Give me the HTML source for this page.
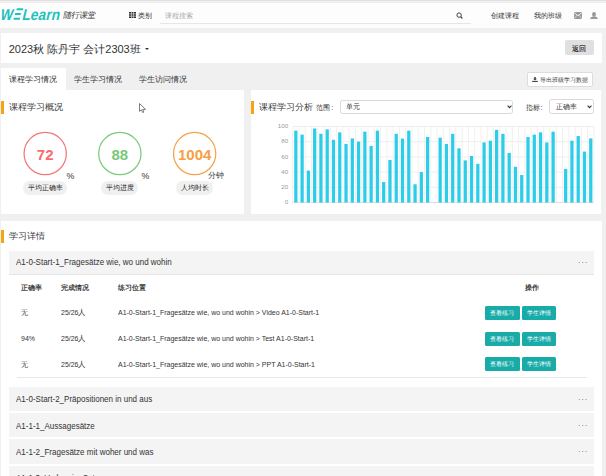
<!DOCTYPE html>
<html><head><meta charset="utf-8">
<style>
*{box-sizing:border-box;margin:0;padding:0}
html,body{width:606px;height:476px;overflow:hidden;background:#f0f0f0;font-family:"Liberation Sans",sans-serif;color:#333}
.a{position:absolute}
.t{position:absolute;white-space:nowrap;line-height:1}
.w{background:#fff}
</style></head><body>
<!-- header -->
<div class="a" style="left:0;top:0;width:606px;height:1px;background:#e0e0e0"></div><div class="a" style="left:0;top:1px;width:606px;height:1px;background:#f4f4f4"></div><div class="a" style="left:0;top:2px;width:606px;height:1px;background:#ececec"></div>
<div class="a" style="left:0;top:3px;width:606px;height:25px;background:#fdfdfd"></div>
<svg class="a" style="left:0;top:0" width="62" height="26" viewBox="0 0 62 26"><g transform="translate(0,19.8) skewX(-13)" fill="#1fc3bd">
<text x="-0.6" y="0" font-family="Liberation Sans" font-weight="bold" font-size="15.8" transform="scale(0.84,1)">W</text>
<rect x="14.2" y="-11.6" width="6.4" height="2.1"/><rect x="13.7" y="-6.8" width="5.8" height="2.1"/><rect x="13.3" y="-2.1" width="6.4" height="2.1"/>
<text x="24.6" y="0" font-family="Liberation Sans" font-weight="bold" font-size="15.8" transform="scale(0.87,1)" letter-spacing="0.1">Learn</text>
</g></svg>
<div class="t" style="left:62.5px;top:11.3px;font-size:8.4px;color:#3a3a3a;transform:skewX(-10deg);transform-origin:0 100%">随行课堂</div>
<svg class="a" style="left:128.6px;top:12.4px" width="7" height="6" viewBox="0 0 7 6"><g fill="#333"><rect x="0" y="0" width="2" height="1.6"/><rect x="2.5" y="0" width="2" height="1.6"/><rect x="5" y="0" width="2" height="1.6"/><rect x="0" y="2.2" width="2" height="1.6"/><rect x="2.5" y="2.2" width="2" height="1.6"/><rect x="5" y="2.2" width="2" height="1.6"/><rect x="0" y="4.4" width="2" height="1.6"/><rect x="2.5" y="4.4" width="2" height="1.6"/><rect x="5" y="4.4" width="2" height="1.6"/></g></svg>
<div class="t" style="left:137.8px;top:11.5px;font-size:7px;color:#333">类别</div>
<div class="a" style="left:160px;top:23px;width:311px;height:1px;background:#e6e6e6"></div>
<div class="t" style="left:164.9px;top:11.5px;font-size:7px;color:#aaa">课程搜索</div>
<svg class="a" style="left:455.5px;top:12px" width="8" height="8" viewBox="0 0 8 8"><circle cx="3.1" cy="3.1" r="2.2" fill="none" stroke="#444" stroke-width="1"/><line x1="4.7" y1="4.7" x2="6.4" y2="6.5" stroke="#444" stroke-width="1.2"/></svg>
<div class="t" style="left:490.9px;top:11.5px;font-size:7px;color:#333">创建课程</div>
<div class="t" style="left:533.8px;top:11.5px;font-size:7px;color:#333">我的班级</div>
<svg class="a" style="left:573.7px;top:11.8px" width="8" height="7.2" viewBox="0 0 8 7.2"><rect x="0" y="0" width="8" height="7.2" fill="#999"/><path d="M0 0.5 L4 3.8 L8 0.5" fill="none" stroke="#fff" stroke-width="0.8"/><path d="M0 6.8 L3 3.3 M8 6.8 L5 3.3" stroke="#fff" stroke-width="0.6"/></svg>
<svg class="a" style="left:590px;top:11.8px" width="8" height="7.2" viewBox="0 0 8 7.2"><ellipse cx="4" cy="2.4" rx="1.9" ry="2.4" fill="#999"/><path d="M0 7.2 Q0.3 4.8 2.8 4.6 L5.2 4.6 Q7.7 4.8 8 7.2 Z" fill="#999"/></svg>

<!-- title card -->
<div class="a w" style="left:1.3px;top:33.3px;width:600.4px;height:29.3px"></div>
<div class="t" style="left:8.7px;top:43.5px;font-size:11px;color:#333">2023秋 陈丹宇 会计2303班</div>
<div class="a" style="left:144.6px;top:47.8px;width:0;height:0;border-left:2px solid transparent;border-right:2px solid transparent;border-top:2px solid #333"></div>
<div class="a" style="left:565.2px;top:40.4px;width:28.7px;height:14.7px;background:#e0e0e0;border-radius:2px"></div>
<div class="t" style="left:564.7px;top:44.6px;width:28.7px;text-align:center;font-size:7px;color:#111;-webkit-text-stroke:0.1px #111">返回</div>

<!-- tabs -->
<div class="a w" style="left:1.3px;top:68.1px;width:64.7px;height:22.2px"></div>
<div class="t" style="left:8.9px;top:75.9px;font-size:8px;color:#333">课程学习情况</div>
<div class="t" style="left:73.9px;top:75.9px;font-size:8px;color:#333">学生学习情况</div>
<div class="t" style="left:138.6px;top:75.9px;font-size:8px;color:#333">学生访问情况</div>
<div class="a w" style="left:526.6px;top:72.3px;width:66.7px;height:14.8px;border:1px solid #ddd;border-radius:2px"></div>
<svg class="a" style="left:532px;top:77px" width="6" height="5" viewBox="0 0 6 5"><path d="M2.2 0 H3.8 V1.8 H5 L3 3.6 L1 1.8 H2.2 Z" fill="#444"/><rect x="0.2" y="3.9" width="5.6" height="1.1" fill="#444"/></svg>
<div class="t" style="left:539.8px;top:76.7px;font-size:6px;color:#333">导出班级学习数据</div>

<!-- left panel -->
<div class="a w" style="left:1.3px;top:90.1px;width:243.1px;height:124.1px"></div>
<div class="a" style="left:1.3px;top:101.4px;width:2.5px;height:12.2px;background:#f7a312"></div>
<div class="t" style="left:8.8px;top:103px;font-size:9px;color:#3c3c3c">课程学习概况</div>

<svg class="a" style="left:0;top:0" width="245" height="215">
<circle cx="45.2" cy="153.55" r="21.15" fill="none" stroke="#f57878" stroke-width="1.25"/>
<circle cx="119.85" cy="153.55" r="21.15" fill="none" stroke="#7bc97b" stroke-width="1.25"/>
<circle cx="194.65" cy="153.55" r="21.15" fill="none" stroke="#f5a446" stroke-width="1.25"/>
</svg>
<div class="t" style="left:15.2px;top:147.3px;width:60px;text-align:center;font-size:15px;font-weight:bold;color:#f86a6e">72</div>
<div class="t" style="left:89.85px;top:147.3px;width:60px;text-align:center;font-size:15px;font-weight:bold;color:#79c879">88</div>
<div class="t" style="left:164.65px;top:147.3px;width:60px;text-align:center;font-size:15px;font-weight:bold;color:#f5a042">1004</div>
<div class="t" style="left:66.6px;top:171.5px;font-size:8.8px;color:#333">%</div>
<div class="t" style="left:141.6px;top:171.5px;font-size:8.8px;color:#333">%</div>
<div class="t" style="left:207.5px;top:171.5px;font-size:8px;color:#333">分钟</div>
<div class="t" style="left:23px;top:181.4px;width:44.4px;height:13.3px;line-height:13.6px;text-align:center;font-size:7px;color:#222;background:#f0f0f0;border-radius:7px">平均正确率</div>
<div class="t" style="left:101.1px;top:181.4px;width:37.3px;height:13.3px;line-height:13.6px;text-align:center;font-size:7px;color:#222;background:#f0f0f0;border-radius:7px">平均进度</div>
<div class="t" style="left:176.1px;top:181.4px;width:37.3px;height:13.3px;line-height:13.6px;text-align:center;font-size:7px;color:#222;background:#f0f0f0;border-radius:7px">人均时长</div>

<!-- right panel -->
<div class="a w" style="left:251px;top:90.1px;width:350.3px;height:124.1px"></div>
<div class="a" style="left:251.3px;top:101px;width:2.5px;height:12.8px;background:#f7a312"></div>
<div class="t" style="left:258.6px;top:103px;font-size:9px;color:#3c3c3c">课程学习分析</div>
<div class="t" style="left:316.3px;top:103.5px;font-size:7px;color:#333">范围</div>
<div class="t" style="left:331.2px;top:103.5px;font-size:7px;color:#333">:</div>
<div class="a" style="left:339.6px;top:99.5px;width:173.8px;height:14.9px;border:1px solid #d9d9d9;border-radius:2.5px;background:#fff"></div>
<div class="t" style="left:346.3px;top:103.4px;font-size:7px;color:#333">单元</div>
<svg class="a" style="left:506.5px;top:105px" width="5" height="4" viewBox="0 0 5 4"><path d="M0.6 0.7 L2.5 2.7 L4.4 0.7" fill="none" stroke="#333" stroke-width="1.1"/></svg>
<div class="t" style="left:525.8px;top:103.5px;font-size:7px;color:#333">指标</div>
<div class="t" style="left:540.6px;top:103.5px;font-size:7px;color:#333">:</div>
<div class="a" style="left:549.4px;top:99.2px;width:44.5px;height:15px;border:1px solid #d9d9d9;border-radius:2.5px;background:#fff"></div>
<div class="t" style="left:555.6px;top:103.6px;font-size:6.6px;color:#333">正确率</div>
<svg class="a" style="left:586.5px;top:105px" width="5" height="4" viewBox="0 0 5 4"><path d="M0.6 0.7 L2.5 2.7 L4.4 0.7" fill="none" stroke="#333" stroke-width="1.1"/></svg>

<svg class="a" style="left:0;top:0" width="606" height="215"><line x1="292.7" y1="202.5" x2="593.9" y2="202.5" stroke="#ddd" stroke-width="1"></line><text x="288.2" y="204.1" font-size="6.2" fill="#999" text-anchor="end" font-family="Liberation Sans">0</text><line x1="292.7" y1="187.3" x2="593.9" y2="187.3" stroke="#eee" stroke-width="1"></line><text x="288.2" y="188.9" font-size="6.2" fill="#999" text-anchor="end" font-family="Liberation Sans">20</text><line x1="292.7" y1="172.1" x2="593.9" y2="172.1" stroke="#eee" stroke-width="1"></line><text x="288.2" y="173.7" font-size="6.2" fill="#999" text-anchor="end" font-family="Liberation Sans">40</text><line x1="292.7" y1="156.9" x2="593.9" y2="156.9" stroke="#eee" stroke-width="1"></line><text x="288.2" y="158.5" font-size="6.2" fill="#999" text-anchor="end" font-family="Liberation Sans">60</text><line x1="292.7" y1="141.7" x2="593.9" y2="141.7" stroke="#eee" stroke-width="1"></line><text x="288.2" y="143.29999999999998" font-size="6.2" fill="#999" text-anchor="end" font-family="Liberation Sans">80</text><line x1="292.7" y1="126.5" x2="593.9" y2="126.5" stroke="#eee" stroke-width="1"></line><text x="288.2" y="128.1" font-size="6.2" fill="#999" text-anchor="end" font-family="Liberation Sans">100</text><line x1="292.7" y1="126.5" x2="292.7" y2="202.5" stroke="#f0f0f0" stroke-width="1"></line><line x1="298.97499999999997" y1="126.5" x2="298.97499999999997" y2="202.5" stroke="#f0f0f0" stroke-width="1"></line><line x1="305.25" y1="126.5" x2="305.25" y2="202.5" stroke="#f0f0f0" stroke-width="1"></line><line x1="311.525" y1="126.5" x2="311.525" y2="202.5" stroke="#f0f0f0" stroke-width="1"></line><line x1="317.8" y1="126.5" x2="317.8" y2="202.5" stroke="#f0f0f0" stroke-width="1"></line><line x1="324.075" y1="126.5" x2="324.075" y2="202.5" stroke="#f0f0f0" stroke-width="1"></line><line x1="330.34999999999997" y1="126.5" x2="330.34999999999997" y2="202.5" stroke="#f0f0f0" stroke-width="1"></line><line x1="336.625" y1="126.5" x2="336.625" y2="202.5" stroke="#f0f0f0" stroke-width="1"></line><line x1="342.9" y1="126.5" x2="342.9" y2="202.5" stroke="#f0f0f0" stroke-width="1"></line><line x1="349.17499999999995" y1="126.5" x2="349.17499999999995" y2="202.5" stroke="#f0f0f0" stroke-width="1"></line><line x1="355.45" y1="126.5" x2="355.45" y2="202.5" stroke="#f0f0f0" stroke-width="1"></line><line x1="361.72499999999997" y1="126.5" x2="361.72499999999997" y2="202.5" stroke="#f0f0f0" stroke-width="1"></line><line x1="368" y1="126.5" x2="368" y2="202.5" stroke="#f0f0f0" stroke-width="1"></line><line x1="374.275" y1="126.5" x2="374.275" y2="202.5" stroke="#f0f0f0" stroke-width="1"></line><line x1="380.54999999999995" y1="126.5" x2="380.54999999999995" y2="202.5" stroke="#f0f0f0" stroke-width="1"></line><line x1="386.825" y1="126.5" x2="386.825" y2="202.5" stroke="#f0f0f0" stroke-width="1"></line><line x1="393.09999999999997" y1="126.5" x2="393.09999999999997" y2="202.5" stroke="#f0f0f0" stroke-width="1"></line><line x1="399.375" y1="126.5" x2="399.375" y2="202.5" stroke="#f0f0f0" stroke-width="1"></line><line x1="405.65" y1="126.5" x2="405.65" y2="202.5" stroke="#f0f0f0" stroke-width="1"></line><line x1="411.92499999999995" y1="126.5" x2="411.92499999999995" y2="202.5" stroke="#f0f0f0" stroke-width="1"></line><line x1="418.2" y1="126.5" x2="418.2" y2="202.5" stroke="#f0f0f0" stroke-width="1"></line><line x1="424.47499999999997" y1="126.5" x2="424.47499999999997" y2="202.5" stroke="#f0f0f0" stroke-width="1"></line><line x1="430.75" y1="126.5" x2="430.75" y2="202.5" stroke="#f0f0f0" stroke-width="1"></line><line x1="437.025" y1="126.5" x2="437.025" y2="202.5" stroke="#f0f0f0" stroke-width="1"></line><line x1="443.29999999999995" y1="126.5" x2="443.29999999999995" y2="202.5" stroke="#f0f0f0" stroke-width="1"></line><line x1="449.575" y1="126.5" x2="449.575" y2="202.5" stroke="#f0f0f0" stroke-width="1"></line><line x1="455.84999999999997" y1="126.5" x2="455.84999999999997" y2="202.5" stroke="#f0f0f0" stroke-width="1"></line><line x1="462.125" y1="126.5" x2="462.125" y2="202.5" stroke="#f0f0f0" stroke-width="1"></line><line x1="468.4" y1="126.5" x2="468.4" y2="202.5" stroke="#f0f0f0" stroke-width="1"></line><line x1="474.67499999999995" y1="126.5" x2="474.67499999999995" y2="202.5" stroke="#f0f0f0" stroke-width="1"></line><line x1="480.94999999999993" y1="126.5" x2="480.94999999999993" y2="202.5" stroke="#f0f0f0" stroke-width="1"></line><line x1="487.22499999999997" y1="126.5" x2="487.22499999999997" y2="202.5" stroke="#f0f0f0" stroke-width="1"></line><line x1="493.5" y1="126.5" x2="493.5" y2="202.5" stroke="#f0f0f0" stroke-width="1"></line><line x1="499.775" y1="126.5" x2="499.775" y2="202.5" stroke="#f0f0f0" stroke-width="1"></line><line x1="506.04999999999995" y1="126.5" x2="506.04999999999995" y2="202.5" stroke="#f0f0f0" stroke-width="1"></line><line x1="512.3249999999999" y1="126.5" x2="512.3249999999999" y2="202.5" stroke="#f0f0f0" stroke-width="1"></line><line x1="518.5999999999999" y1="126.5" x2="518.5999999999999" y2="202.5" stroke="#f0f0f0" stroke-width="1"></line><line x1="524.875" y1="126.5" x2="524.875" y2="202.5" stroke="#f0f0f0" stroke-width="1"></line><line x1="531.15" y1="126.5" x2="531.15" y2="202.5" stroke="#f0f0f0" stroke-width="1"></line><line x1="537.425" y1="126.5" x2="537.425" y2="202.5" stroke="#f0f0f0" stroke-width="1"></line><line x1="543.6999999999999" y1="126.5" x2="543.6999999999999" y2="202.5" stroke="#f0f0f0" stroke-width="1"></line><line x1="549.9749999999999" y1="126.5" x2="549.9749999999999" y2="202.5" stroke="#f0f0f0" stroke-width="1"></line><line x1="556.25" y1="126.5" x2="556.25" y2="202.5" stroke="#f0f0f0" stroke-width="1"></line><line x1="562.525" y1="126.5" x2="562.525" y2="202.5" stroke="#f0f0f0" stroke-width="1"></line><line x1="568.8" y1="126.5" x2="568.8" y2="202.5" stroke="#f0f0f0" stroke-width="1"></line><line x1="575.075" y1="126.5" x2="575.075" y2="202.5" stroke="#f0f0f0" stroke-width="1"></line><line x1="581.3499999999999" y1="126.5" x2="581.3499999999999" y2="202.5" stroke="#f0f0f0" stroke-width="1"></line><line x1="587.625" y1="126.5" x2="587.625" y2="202.5" stroke="#f0f0f0" stroke-width="1"></line><line x1="593.9" y1="126.5" x2="593.9" y2="202.5" stroke="#f0f0f0" stroke-width="1"></line><rect x="294.2125" y="130.60399999999998" width="3.25" height="71.896" fill="#2ccde8"></rect><rect x="300.4875" y="134.632" width="3.25" height="67.868" fill="#2ccde8"></rect><rect x="306.7625" y="170.57999999999998" width="3.25" height="31.92" fill="#2ccde8"></rect><rect x="313.03749999999997" y="128.476" width="3.25" height="74.024" fill="#2ccde8"></rect><rect x="319.3125" y="133.796" width="3.25" height="68.70400000000001" fill="#2ccde8"></rect><rect x="325.5875" y="129.312" width="3.25" height="73.188" fill="#2ccde8"></rect><rect x="331.86249999999995" y="139.8" width="3.25" height="62.7" fill="#2ccde8"></rect><rect x="338.1375" y="132.352" width="3.25" height="70.148" fill="#2ccde8"></rect><rect x="344.41249999999997" y="143.904" width="3.25" height="58.596" fill="#2ccde8"></rect><rect x="350.6875" y="138.43200000000002" width="3.25" height="64.068" fill="#2ccde8"></rect><rect x="356.9625" y="141.624" width="3.25" height="60.876" fill="#2ccde8"></rect><rect x="363.23749999999995" y="131.668" width="3.25" height="70.832" fill="#2ccde8"></rect><rect x="369.5125" y="146.03199999999998" width="3.25" height="56.468" fill="#2ccde8"></rect><rect x="375.78749999999997" y="130.60399999999998" width="3.25" height="71.896" fill="#2ccde8"></rect><rect x="382.0625" y="182.056" width="3.25" height="20.444" fill="#2ccde8"></rect><rect x="388.3375" y="159.94" width="3.25" height="42.56" fill="#2ccde8"></rect><rect x="394.61249999999995" y="133.796" width="3.25" height="68.70400000000001" fill="#2ccde8"></rect><rect x="400.8875" y="138.584" width="3.25" height="63.916" fill="#2ccde8"></rect><rect x="407.16249999999997" y="130.60399999999998" width="3.25" height="71.896" fill="#2ccde8"></rect><rect x="413.4375" y="184.26" width="3.25" height="18.24" fill="#2ccde8"></rect><rect x="419.7125" y="172.1" width="3.25" height="30.4" fill="#2ccde8"></rect><rect x="425.98749999999995" y="136.988" width="3.25" height="65.512" fill="#2ccde8"></rect><rect x="438.53749999999997" y="137.672" width="3.25" height="64.828" fill="#2ccde8"></rect><rect x="444.8125" y="143.904" width="3.25" height="58.596" fill="#2ccde8"></rect><rect x="451.0875" y="133.796" width="3.25" height="68.70400000000001" fill="#2ccde8"></rect><rect x="457.36249999999995" y="148.312" width="3.25" height="54.188" fill="#2ccde8"></rect><rect x="463.63749999999993" y="160.39600000000002" width="3.25" height="42.104" fill="#2ccde8"></rect><rect x="469.91249999999997" y="155.988" width="3.25" height="46.512" fill="#2ccde8"></rect><rect x="476.1875" y="163.816" width="3.25" height="38.684" fill="#2ccde8"></rect><rect x="482.4625" y="142.46" width="3.25" height="60.04" fill="#2ccde8"></rect><rect x="488.73749999999995" y="140.712" width="3.25" height="61.788000000000004" fill="#2ccde8"></rect><rect x="495.01249999999993" y="129.844" width="3.25" height="72.65599999999999" fill="#2ccde8"></rect><rect x="501.28749999999997" y="133.796" width="3.25" height="68.70400000000001" fill="#2ccde8"></rect><rect x="507.5625" y="152.948" width="3.25" height="49.552" fill="#2ccde8"></rect><rect x="513.8375" y="166.78" width="3.25" height="35.72" fill="#2ccde8"></rect><rect x="520.1125" y="174.988" width="3.25" height="27.512000000000004" fill="#2ccde8"></rect><rect x="526.3874999999999" y="136.988" width="3.25" height="65.512" fill="#2ccde8"></rect><rect x="532.6624999999999" y="134.632" width="3.25" height="67.868" fill="#2ccde8"></rect><rect x="538.9375" y="132.352" width="3.25" height="70.148" fill="#2ccde8"></rect><rect x="545.2125" y="142.46" width="3.25" height="60.04" fill="#2ccde8"></rect><rect x="551.4875" y="131.668" width="3.25" height="70.832" fill="#2ccde8"></rect><rect x="564.0374999999999" y="168.908" width="3.25" height="33.592000000000006" fill="#2ccde8"></rect><rect x="570.3125" y="140.712" width="3.25" height="61.788000000000004" fill="#2ccde8"></rect><rect x="576.5875" y="136.076" width="3.25" height="66.424" fill="#2ccde8"></rect><rect x="582.8625" y="151.57999999999998" width="3.25" height="50.92" fill="#2ccde8"></rect><rect x="589.1375" y="138.43200000000002" width="3.25" height="64.068" fill="#2ccde8"></rect></svg>

<!-- bottom card -->
<div class="a w" style="left:1.3px;top:220.5px;width:600.4px;height:260px"></div>
<div class="a" style="left:1.3px;top:230.2px;width:2.7px;height:12.6px;background:#f7a312"></div>
<div class="t" style="left:8.7px;top:232px;font-size:9px;color:#3c3c3c">学习详情</div>

<div class="a" style="left:9.2px;top:250.6px;width:584.7px;height:24px;background:#f4f4f4;border-bottom:1px solid #e6e6e6"></div>
<div class="t" style="left:16px;top:258.4px;font-size:8.8px;color:#333;transform:scaleX(0.91);transform-origin:0 0">A1-0-Start-1_Fragesätze wie, wo und wohin</div>
<svg class="a" style="left:576px;top:261.1px" width="12" height="3" viewBox="0 0 12 3"><g fill="#888"><circle cx="3.3" cy="1.5" r="0.6"/><circle cx="6.7" cy="1.5" r="0.6"/><circle cx="10.1" cy="1.5" r="0.6"/></g></svg>

<div class="t" style="left:21.2px;top:283.8px;font-size:7px;color:#222;-webkit-text-stroke:0.18px #222">正确率</div>
<div class="t" style="left:61.2px;top:283.8px;font-size:7px;color:#222;-webkit-text-stroke:0.18px #222">完成情况</div>
<div class="t" style="left:117.8px;top:283.8px;font-size:7px;color:#222;-webkit-text-stroke:0.18px #222">练习位置</div>
<div class="t" style="left:525.4px;top:283.8px;font-size:7px;color:#222;-webkit-text-stroke:0.18px #222">操作</div>

<div class="t" style="left:21.2px;top:309.2px;font-size:7px">无</div>
<div class="t" style="left:61.2px;top:309.3px;font-size:7.6px;transform:scaleX(0.92);transform-origin:0 0">25/26人</div>
<div class="t" style="left:117.8px;top:309.3px;font-size:7.6px;transform:scaleX(0.92);transform-origin:0 0">A1-0-Start-1_Fragesätze wie, wo und wohin &gt; Video A1-0-Start-1</div>
<div class="t" style="left:21.2px;top:335.2px;font-size:7.6px;transform:scaleX(0.92);transform-origin:0 0">94%</div>
<div class="t" style="left:61.2px;top:335.2px;font-size:7.6px;transform:scaleX(0.92);transform-origin:0 0">25/26人</div>
<div class="t" style="left:117.8px;top:335.2px;font-size:7.6px;transform:scaleX(0.92);transform-origin:0 0">A1-0-Start-1_Fragesätze wie, wo und wohin &gt; Test A1-0-Start-1</div>
<div class="t" style="left:21.2px;top:360.5px;font-size:7px">无</div>
<div class="t" style="left:61.2px;top:360.6px;font-size:7.6px;transform:scaleX(0.92);transform-origin:0 0">25/26人</div>
<div class="t" style="left:117.8px;top:360.6px;font-size:7.6px;transform:scaleX(0.92);transform-origin:0 0">A1-0-Start-1_Fragesätze wie, wo und wohin &gt; PPT A1-0-Start-1</div>

<div class="t" style="left:485.2px;top:306.3px;width:34.5px;height:14px;line-height:14px;text-align:center;font-size:6px;color:#fff;background:#18aba8;border-radius:1.5px">查看练习</div>
<div class="t" style="left:522px;top:306.3px;width:34.1px;height:14px;line-height:14px;text-align:center;font-size:6px;color:#fff;background:#18aba8;border-radius:1.5px">学生详情</div>
<div class="t" style="left:485.2px;top:331.9px;width:34.5px;height:14px;line-height:14px;text-align:center;font-size:6px;color:#fff;background:#18aba8;border-radius:1.5px">查看练习</div>
<div class="t" style="left:522px;top:331.9px;width:34.1px;height:14px;line-height:14px;text-align:center;font-size:6px;color:#fff;background:#18aba8;border-radius:1.5px">学生详情</div>
<div class="t" style="left:485.2px;top:357px;width:34.5px;height:14px;line-height:14px;text-align:center;font-size:6px;color:#fff;background:#18aba8;border-radius:1.5px">查看练习</div>
<div class="t" style="left:522px;top:357px;width:34.1px;height:14px;line-height:14px;text-align:center;font-size:6px;color:#fff;background:#18aba8;border-radius:1.5px">学生详情</div>
<div class="a" style="left:16.6px;top:377px;width:570px;height:1px;background:#e8e8e8"></div>

<div class="a" style="left:9.2px;top:386.7px;width:584.7px;height:24.5px;background:#f4f4f4"></div>
<div class="t" style="left:16px;top:395.4px;font-size:8.8px;color:#333;transform:scaleX(0.91);transform-origin:0 0">A1-0-Start-2_Präpositionen in und aus</div>
<svg class="a" style="left:576px;top:397.5px" width="12" height="3" viewBox="0 0 12 3"><g fill="#888"><circle cx="3.3" cy="1.5" r="0.6"/><circle cx="6.7" cy="1.5" r="0.6"/><circle cx="10.1" cy="1.5" r="0.6"/></g></svg>
<div class="a" style="left:9.2px;top:413.2px;width:584.7px;height:24.2px;background:#f4f4f4"></div>
<div class="t" style="left:16px;top:421.7px;font-size:8.8px;color:#333;transform:scaleX(0.91);transform-origin:0 0">A1-1-1_Aussagesätze</div>
<svg class="a" style="left:576px;top:423.8px" width="12" height="3" viewBox="0 0 12 3"><g fill="#888"><circle cx="3.3" cy="1.5" r="0.6"/><circle cx="6.7" cy="1.5" r="0.6"/><circle cx="10.1" cy="1.5" r="0.6"/></g></svg>
<div class="a" style="left:9.2px;top:439.4px;width:584.7px;height:24.2px;background:#f4f4f4"></div>
<div class="t" style="left:16px;top:447.9px;font-size:8.8px;color:#333;transform:scaleX(0.91);transform-origin:0 0">A1-1-2_Fragesätze mit woher und was</div>
<svg class="a" style="left:576px;top:450.0px" width="12" height="3" viewBox="0 0 12 3"><g fill="#888"><circle cx="3.3" cy="1.5" r="0.6"/><circle cx="6.7" cy="1.5" r="0.6"/><circle cx="10.1" cy="1.5" r="0.6"/></g></svg>
<div class="a" style="left:9.2px;top:465.8px;width:584.7px;height:24.2px;background:#f4f4f4"></div>
<div class="t" style="left:16px;top:474.2px;font-size:8.8px;color:#333;transform:scaleX(0.91);transform-origin:0 0">A1-1-3_Verben im Satz</div>

<!-- cursor -->
<svg class="a" style="left:139px;top:103px" width="8" height="11" viewBox="0 0 8 11"><path d="M0.5 0.5 L0.5 8.4 L2.4 6.8 L3.7 9.6 L4.9 9.1 L3.7 6.4 L6.6 6.4 Z" fill="#fff" stroke="#666" stroke-width="0.85" stroke-linejoin="round"/></svg>


</body></html>
